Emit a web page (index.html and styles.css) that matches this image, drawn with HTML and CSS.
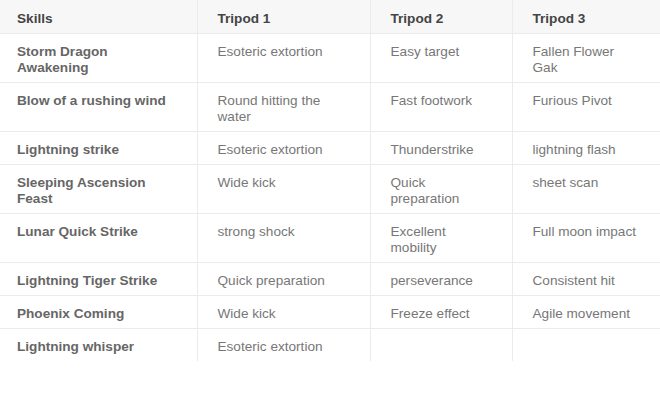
FILE: index.html
```html
<!DOCTYPE html>
<html>
<head>
<meta charset="utf-8">
<link rel="stylesheet" href="styles.css">
</head>
<body>
<table class="skills">
  <colgroup>
    <col class="c1"><col class="c2"><col class="c3"><col class="c4">
  </colgroup>
  <thead>
    <tr><th>Skills</th><th>Tripod 1</th><th>Tripod 2</th><th>Tripod 3</th></tr>
  </thead>
  <tbody>
    <tr><td class="name">Storm Dragon Awakening</td><td>Esoteric extortion</td><td>Easy target</td><td>Fallen Flower Gak</td></tr>
    <tr><td class="name">Blow of a rushing wind</td><td>Round hitting the water</td><td>Fast footwork</td><td>Furious Pivot</td></tr>
    <tr><td class="name">Lightning strike</td><td>Esoteric extortion</td><td>Thunderstrike</td><td>lightning flash</td></tr>
    <tr><td class="name">Sleeping Ascension Feast</td><td>Wide kick</td><td>Quick preparation</td><td>sheet scan</td></tr>
    <tr><td class="name">Lunar Quick Strike</td><td>strong shock</td><td>Excellent mobility</td><td>Full moon impact</td></tr>
    <tr><td class="name">Lightning Tiger Strike</td><td>Quick preparation</td><td>perseverance</td><td>Consistent hit</td></tr>
    <tr><td class="name">Phoenix Coming</td><td>Wide kick</td><td>Freeze effect</td><td>Agile movement</td></tr>
    <tr class="last"><td class="name">Lightning whisper</td><td>Esoteric extortion</td><td></td><td></td></tr>
  </tbody>
</table>
</body>
</html>
```
FILE: styles.css
```css
html, body {
  margin: 0;
  padding: 0;
  background: #fff;
}
body {
  font-family: "Liberation Sans", Arial, sans-serif;
  font-size: 13.6px;
  line-height: 16px;
  color: #777;
}
.skills {
  width: 660px;
  border-collapse: collapse;
  table-layout: fixed;
}
.c1 { width: 197px; }
.c2 { width: 173px; }
.c3 { width: 142px; }
.c4 { width: 148px; }
.skills th,
.skills td {
  text-align: left;
  vertical-align: top;
  padding: 10px 20px 6px;
  border-left: 1px solid #ebebeb;
  border-bottom: 1px solid #ebebeb;
}
.skills th:first-child,
.skills td:first-child {
  border-left: none;
  padding-left: 17px;
}
.skills th {
  background: #f7f7f7;
  color: #444;
  font-weight: bold;
  padding-top: 11px;
}
.skills td.name {
  font-weight: bold;
  color: #666;
}
.skills tr.last td {
  border-bottom: none;
}
```
